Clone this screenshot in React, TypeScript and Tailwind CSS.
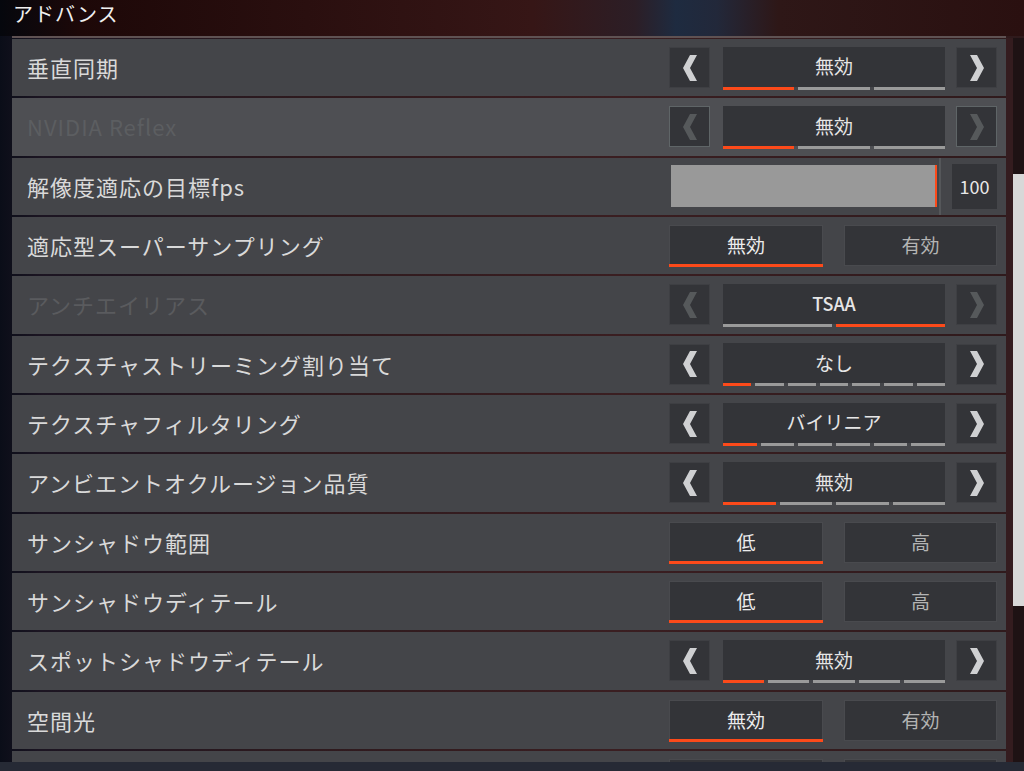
import React from 'react'

type Row =
  | { kind: 'arrow'; label: string; value: string; segs: number; active: number; disabled?: boolean; bold?: boolean; light?: boolean }
  | { kind: 'toggle'; label: string; a: string; b: string }
  | { kind: 'slider'; label: string; value: string }

const rows: Row[] = [
  { kind: 'arrow', label: '垂直同期', value: '無効', segs: 3, active: 0 },
  { kind: 'arrow', label: 'NVIDIA Reflex', value: '無効', segs: 3, active: 0, disabled: true, light: true },
  { kind: 'slider', label: '解像度適応の目標fps', value: '100' },
  { kind: 'toggle', label: '適応型スーパーサンプリング', a: '無効', b: '有効' },
  { kind: 'arrow', label: 'アンチエイリアス', value: 'TSAA', segs: 2, active: 1, disabled: true, bold: true },
  { kind: 'arrow', label: 'テクスチャストリーミング割り当て', value: 'なし', segs: 7, active: 0 },
  { kind: 'arrow', label: 'テクスチャフィルタリング', value: 'バイリニア', segs: 6, active: 0 },
  { kind: 'arrow', label: 'アンビエントオクルージョン品質', value: '無効', segs: 4, active: 0 },
  { kind: 'toggle', label: 'サンシャドウ範囲', a: '低', b: '高' },
  { kind: 'toggle', label: 'サンシャドウディテール', a: '低', b: '高' },
  { kind: 'arrow', label: 'スポットシャドウディテール', value: '無効', segs: 5, active: 0 },
  { kind: 'toggle', label: '空間光', a: '無効', b: '有効' },
  { kind: 'toggle', label: '', a: '', b: '' },
]

function Chevron({ dir, disabled }: { dir: 'left' | 'right'; disabled?: boolean }) {
  const pts = dir === 'left' ? '7,0 14,0 7,13 14,26 7,26 0,13' : '0,0 7,0 14,13 7,26 0,26 7,13'
  return (
    <svg width="14" height="26" viewBox="0 0 14 26">
      <polygon points={pts} fill={disabled ? '#56595b' : '#cfd0d2'} />
    </svg>
  )
}

function ArrowBtn({ dir, disabled, light }: { dir: 'left' | 'right'; disabled?: boolean; light?: boolean }) {
  return (
    <div
      className={`w-[41px] h-[41px] flex items-center justify-center bg-[#333438] border ${
        light ? 'border-[#5f6567]' : 'border-[#3e3f43]'
      }`}
    >
      <Chevron dir={dir} disabled={disabled} />
    </div>
  )
}

function ArrowControl({ row }: { row: Extract<Row, { kind: 'arrow' }> }) {
  return (
    <div className="flex items-center">
      <ArrowBtn dir="left" disabled={row.disabled} light={row.light} />
      <div className="ml-[13px] mr-[11px] w-[222px] flex flex-col mt-[1px]">
        <div
          className={`h-[40px] bg-[#333438] flex items-center justify-center text-[#e6e6e6] ${
            row.bold ? 'text-[18px] font-medium' : 'text-[19px]'
          }`}
        >
          {row.value}
        </div>
        <div className="flex gap-[4px] h-[3px]">
          {Array.from({ length: row.segs }).map((_, i) => (
            <div key={i} className={`flex-1 ${i === row.active ? 'bg-[#fc4a1a]' : 'bg-[#9a9a9a]'}`} />
          ))}
        </div>
      </div>
      <ArrowBtn dir="right" disabled={row.disabled} light={row.light} />
    </div>
  )
}

function ToggleControl({ a, b }: { a: string; b: string }) {
  return (
    <div className="flex gap-[21px]">
      <div className="relative w-[154px] h-[41px] bg-[#333438] border border-[#494a4e] flex items-center justify-center text-[19px] text-[#ececec]">
        {a}
        <div className="absolute left-[-1px] right-[-1px] bottom-[-2px] h-[3px] bg-[#fc4a1a]" />
      </div>
      <div className="w-[153px] h-[41px] bg-[#333438] border border-[#494a4e] flex items-center justify-center text-[19px] text-[#b4b4b4]">
        {b}
      </div>
    </div>
  )
}

function SliderControl({ value }: { value: string }) {
  return (
    <div className="flex items-center h-full">
      <div className="w-[266px] h-[42px] bg-[#999999] flex justify-end">
        <div className="w-[2px] h-full bg-[#fc4a1a]" />
      </div>
      <div className="w-[2px] self-stretch bg-[#55575a] ml-[2px] mr-[11px]" />
      <div className="w-[45px] h-[45px] bg-[#333438] flex items-center justify-center text-[18px] text-[#e8e8e8]">
        {value}
      </div>
    </div>
  )
}

export default function App() {
  return (
    <div
      className="w-[1024px] h-[771px] overflow-hidden relative flex flex-col bg-[linear-gradient(90deg,#0a0d18_0%,#1c1522_4%,#2e1a1e_30%,#3a1e21_60%,#2f1a1c_100%)]"
      style={{ fontFamily: '"Noto Sans CJK JP", "Noto Sans", sans-serif' }}
    >
      <div className="h-[36px] shrink-0 pl-[13px] bg-[linear-gradient(90deg,#05070d_0%,#1d0808_8%,#2a0f0f_30%,#361616_52%,#2c1e26_62%,#1e2b40_66%,#22283a_70%,#2e1717_76%,#2a1010_100%)]">
        <div className="text-[20px] leading-[28px] text-[#f0f0f0] tracking-[1px]">アドバンス</div>
      </div>
      <div className="ml-[12px] w-[994px] h-[2px] bg-[#5f5253] shrink-0" />
      <div className="flex">
        <div className="ml-[12px] w-[994px] h-[724px] overflow-hidden flex flex-col gap-[2px] pt-[1px]">
          {rows.map((row, i) => (
            <div
              key={i}
              className={`h-[57.33px] shrink-0 flex items-center justify-between pl-[15px] pr-[9px] ${
                row.kind === 'arrow' && row.light ? 'bg-[#4e4f53]' : 'bg-[#444549]'
              }`}
            >
              <div
                className={`text-[22px] tracking-[1px] ${
                  row.kind === 'arrow' && row.disabled ? (row.light ? 'text-[#5c5e61]' : 'text-[#5a5b5e]') : 'text-[#d9d9d9]'
                }`}
              >
                {row.label}
              </div>
              {row.kind === 'arrow' && <ArrowControl row={row} />}
              {row.kind === 'toggle' && <ToggleControl a={row.a} b={row.b} />}
              {row.kind === 'slider' && <SliderControl value={row.value} />}
            </div>
          ))}
        </div>
        <div className="w-[7px] bg-[#341c1f]" />
        <div className="w-[11px] h-[724px] bg-[#1e1214] pt-[136px]">
          <div className="h-[432px] bg-[#d8d8d8]" />
        </div>
      </div>
      <div className="flex-1 bg-[#262a35]" />
    </div>
  )
}
